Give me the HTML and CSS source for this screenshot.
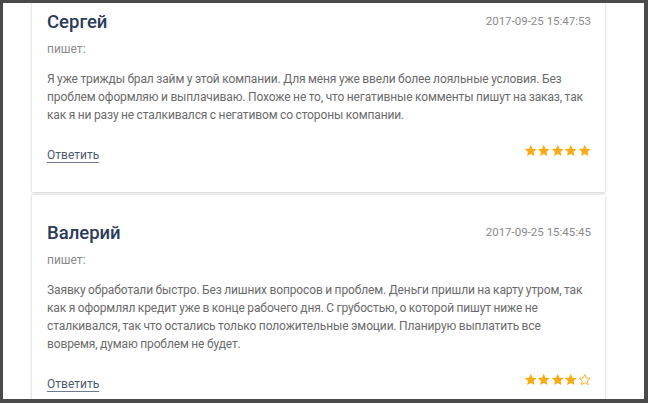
FILE: index.html
```html
<!DOCTYPE html>
<html lang="ru">
<head>
<meta charset="utf-8">
<link rel="stylesheet" href="styles.css">
</head>
<body>
<div class="frame">
  <div class="viewport">
    <div class="list">
      <article class="card">
        <div class="head">
          <h3 class="name">Сергей</h3>
          <span class="date">2017-09-25 15:47:53</span>
        </div>
        <p class="writes">пишет:</p>
        <p class="text">Я уже трижды брал займ у этой компании. Для меня уже ввели более лояльные условия. Без проблем оформляю и выплачиваю. Похоже не то, что негативные комменты пишут на заказ, так как я ни разу не сталкивался с негативом со стороны компании.</p>
        <div class="foot">
          <a class="reply" href="#">Ответить</a>
          <div class="stars">
            <svg viewBox="0 0 24 24"><polygon class="on" points="12,1.5 15.1,8.3 22.5,9.1 17,14.1 18.5,21.5 12,17.8 5.5,21.5 7,14.1 1.5,9.1 8.9,8.3"/></svg>
            <svg viewBox="0 0 24 24"><polygon class="on" points="12,1.5 15.1,8.3 22.5,9.1 17,14.1 18.5,21.5 12,17.8 5.5,21.5 7,14.1 1.5,9.1 8.9,8.3"/></svg>
            <svg viewBox="0 0 24 24"><polygon class="on" points="12,1.5 15.1,8.3 22.5,9.1 17,14.1 18.5,21.5 12,17.8 5.5,21.5 7,14.1 1.5,9.1 8.9,8.3"/></svg>
            <svg viewBox="0 0 24 24"><polygon class="on" points="12,1.5 15.1,8.3 22.5,9.1 17,14.1 18.5,21.5 12,17.8 5.5,21.5 7,14.1 1.5,9.1 8.9,8.3"/></svg>
            <svg viewBox="0 0 24 24"><polygon class="on" points="12,1.5 15.1,8.3 22.5,9.1 17,14.1 18.5,21.5 12,17.8 5.5,21.5 7,14.1 1.5,9.1 8.9,8.3"/></svg>
          </div>
        </div>
      </article>
      <article class="card">
        <div class="head">
          <h3 class="name">Валерий</h3>
          <span class="date">2017-09-25 15:45:45</span>
        </div>
        <p class="writes">пишет:</p>
        <p class="text">Заявку обработали быстро. Без лишних вопросов и проблем. Деньги пришли на карту утром, так как я оформлял кредит уже в конце рабочего дня. С грубостью, о которой пишут ниже не сталкивался, так что остались только положительные эмоции. Планирую выплатить все вовремя, думаю проблем не будет.</p>
        <div class="foot">
          <a class="reply" href="#">Ответить</a>
          <div class="stars">
            <svg viewBox="0 0 24 24"><polygon class="on" points="12,1.5 15.1,8.3 22.5,9.1 17,14.1 18.5,21.5 12,17.8 5.5,21.5 7,14.1 1.5,9.1 8.9,8.3"/></svg>
            <svg viewBox="0 0 24 24"><polygon class="on" points="12,1.5 15.1,8.3 22.5,9.1 17,14.1 18.5,21.5 12,17.8 5.5,21.5 7,14.1 1.5,9.1 8.9,8.3"/></svg>
            <svg viewBox="0 0 24 24"><polygon class="on" points="12,1.5 15.1,8.3 22.5,9.1 17,14.1 18.5,21.5 12,17.8 5.5,21.5 7,14.1 1.5,9.1 8.9,8.3"/></svg>
            <svg viewBox="0 0 24 24"><polygon class="on" points="12,1.5 15.1,8.3 22.5,9.1 17,14.1 18.5,21.5 12,17.8 5.5,21.5 7,14.1 1.5,9.1 8.9,8.3"/></svg>
            <svg viewBox="0 0 24 24"><polygon class="off" points="12,2.5 14.8,8.8 21.5,9.6 16.5,14.2 17.9,20.8 12,17.4 6.1,20.8 7.5,14.2 2.5,9.6 9.2,8.8"/></svg>
          </div>
        </div>
      </article>
    </div>
  </div>
</div>
</body>
</html>
```

FILE: styles.css
```css
* { box-sizing: border-box; }
html, body { margin: 0; padding: 0; }
body {
  font-family: Roboto, "Liberation Sans", Arial, sans-serif;
  background: #4a4a4a;
}
.frame {
  width: 648px;
  height: 403px;
  padding: 3px 4px 4px 3px;
  background: #4a4a4a;
}
.viewport {
  height: 100%;
  background: #fff;
  overflow: hidden;
  padding: 0 39px 0 29px;
}
.list {
  display: flex;
  flex-direction: column;
  gap: 3px;
  margin-top: -19px;
}
.card {
  background: #fff;
  box-shadow: 0 0 3px rgba(0,0,0,0.18), 0 1px 2px rgba(0,0,0,0.08);
  padding: 26px 14px 28px 15px;
}
.head {
  display: flex;
  justify-content: space-between;
  align-items: flex-start;
}
.name {
  margin: 0;
  font-size: 18.5px;
  line-height: 24px;
  font-weight: 500;
  color: #2b3b58;
}
.date {
  font-size: 11.5px;
  line-height: 16px;
  color: #8a8a8a;
  padding-top: 3px;
}
.writes {
  margin: 6px 0 0;
  font-size: 12px;
  line-height: 18px;
  color: #8a8a8a;
}
.text {
  margin: 12px 0 0;
  font-size: 12px;
  line-height: 18px;
  letter-spacing: -0.12px;
  word-spacing: -0.3px;
  color: #6b6b6b;
}
.foot {
  margin-top: 22px;
  display: flex;
  justify-content: space-between;
  align-items: center;
  height: 18px;
}
.reply {
  font-size: 12px;
  line-height: 18px;
  color: #4c5a70;
  text-decoration: underline;
  text-decoration-color: #6f7a8a;
  text-underline-offset: 3px;
  text-decoration-thickness: 1px;
}
.stars {
  display: flex;
  margin-top: -8px;
}
.stars svg {
  width: 13.5px;
  height: 13.5px;
  display: block;
}
.stars .on { fill: #fbab14; }
.stars .off { fill: none; stroke: #fbab14; stroke-width: 1.6; stroke-linejoin: round; }
```
